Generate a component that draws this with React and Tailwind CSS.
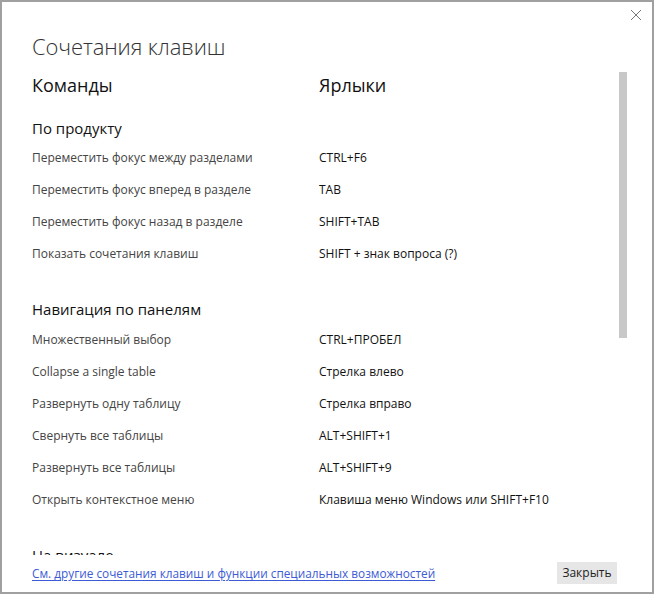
import React from "react";

const sections = [
  {
    title: "По продукту",
    first: true,
    rows: [
      ["Переместить фокус между разделами", "CTRL+F6"],
      ["Переместить фокус вперед в разделе", "TAB"],
      ["Переместить фокус назад в разделе", "SHIFT+TAB"],
      ["Показать сочетания клавиш", "SHIFT + знак вопроса (?)"],
    ],
  },
  {
    title: "Навигация по панелям",
    rows: [
      ["Множественный выбор", "CTRL+ПРОБЕЛ"],
      ["Collapse a single table", "Стрелка влево"],
      ["Развернуть одну таблицу", "Стрелка вправо"],
      ["Свернуть все таблицы", "ALT+SHIFT+1"],
      ["Развернуть все таблицы", "ALT+SHIFT+9"],
      ["Открыть контекстное меню", "Клавиша меню Windows или SHIFT+F10"],
    ],
  },
  {
    title: "На визуале",
    rows: [
      ["Переместить фокус на меню", "CTRL+F6"],
    ],
  },
];

export default function App() {
  return (
    <div
      className="relative w-[654px] h-[594px] bg-white border-2 border-[#a0a0a0] flex flex-col overflow-hidden"
      style={{ fontFamily: '"Open Sans", "Noto Sans", sans-serif' }}
    >
      <button className="absolute right-[10px] top-[7px] w-[12px] h-[12px] text-[#777]">
        <svg width="12" height="12" viewBox="0 0 12 12" fill="none" stroke="currentColor" strokeWidth="1">
          <path d="M1 1 L11 11 M11 1 L1 11" />
        </svg>
      </button>

      <div className="h-[67px] pl-[30px] pt-[30px] shrink-0">
        <div className="text-[22px] leading-[28px] font-light text-[#333] tracking-[-0.1px]">
          Сочетания клавиш
        </div>
      </div>

      <div className="flex h-[486px] shrink-0">
        <div className="flex-1 overflow-hidden pl-[30px]">
          <div className="grid grid-cols-[287px_1fr] h-[32px] items-center text-[18px] text-[#111]">
            <div>Команды</div>
            <div>Ярлыки</div>
          </div>
          {sections.map((s) => (
            <div key={s.title}>
              <div className={s.first ? "pt-[17px] pb-[4px]" : "pt-[29px] pb-[5px]"}>
                <div className="text-[15px] leading-[20px] text-[#111]">{s.title}</div>
              </div>
              {s.rows.map(([cmd, key]) => (
                <div
                  key={cmd}
                  className="grid grid-cols-[287px_1fr] h-[32px] items-center text-[12px]"
                >
                  <div className="text-[#444]">{cmd}</div>
                  <div className="text-[#111]">{key}</div>
                </div>
              ))}
            </div>
          ))}
        </div>
        <div className="w-[33px] shrink-0 pt-[3px]">
          <div className="w-[8px] h-[266px] bg-[#c8c8c8]" />
        </div>
      </div>

      <div className="flex items-center justify-between pl-[30px] pr-[35px] pt-[7px]">
        <a href="#" className="text-[11.8px] leading-[16px] text-[#3d5bd6] underline underline-offset-2">
          См. другие сочетания клавиш и функции специальных возможностей
        </a>
        <button className="w-[60px] h-[22px] bg-[#e6e6e6] text-[12px] text-[#222]">
          Закрыть
        </button>
      </div>
    </div>
  );
}
